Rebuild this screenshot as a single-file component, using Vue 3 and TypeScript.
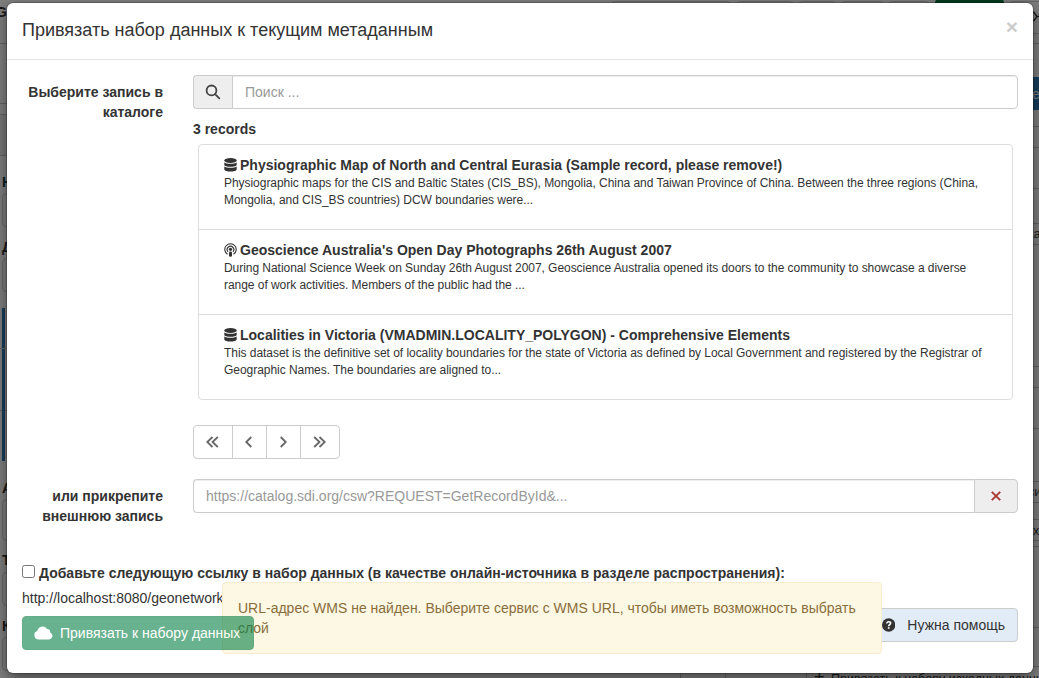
<script setup lang="ts">
import { ref } from 'vue'

interface CatalogRecord {
  kind: 'dataset' | 'service'
  title: string
  summary: string
}

interface Frame {
  x: number
  y: number
  w: number
  h: number
}

const query = ref('')
const remoteUrl = ref('')
const addLink = ref(false)

const records: CatalogRecord[] = [
  {
    kind: 'dataset',
    title: 'Physiographic Map of North and Central Eurasia (Sample record, please remove!)',
    summary:
      'Physiographic maps for the CIS and Baltic States (CIS_BS), Mongolia, China and Taiwan Province of China. Between the three regions (China, Mongolia, and CIS_BS countries) DCW boundaries were...',
  },
  {
    kind: 'service',
    title: "Geoscience Australia's Open Day Photographs 26th August 2007",
    summary:
      'During National Science Week on Sunday 26th August 2007, Geoscience Australia opened its doors to the community to showcase a diverse range of work activities. Members of the public had the ...',
  },
  {
    kind: 'dataset',
    title: 'Localities in Victoria (VMADMIN.LOCALITY_POLYGON) - Comprehensive Elements',
    summary:
      'This dataset is the definitive set of locality boundaries for the state of Victoria as defined by Local Government and registered by the Registrar of Geographic Names. The boundaries are aligned to...',
  },
]

const pager = [
  { name: 'first', d: 'M6.5 1 1.2 6l5.3 5M11.8 1 6.5 6l5.3 5', w: 13 },
  { name: 'prev', d: 'M6.3 1 1.2 6l5.1 5', w: 8 },
  { name: 'next', d: 'M1.7 1l5.1 5-5.1 5', w: 8 },
  { name: 'last', d: 'M1.2 1l5.3 5-5.3 5M6.5 1l5.3 5-5.3 5', w: 13 },
]

const toolbar: Frame[] = [
  { x: 611.5, y: 1.5, w: 119, h: 33 },
  { x: 736.5, y: 1.5, w: 57, h: 33 },
  { x: 798.5, y: 1.5, w: 37, h: 33 },
  { x: 841.5, y: 1.5, w: 42, h: 33 },
  { x: 888.5, y: 1.5, w: 41, h: 33 },
  { x: 1009.5, y: 1.5, w: 60, h: 32 },
]

const fields: Frame[] = [
  { x: 2.5, y: 193.5, w: 300, h: 33 },
  { x: 2.5, y: 258.5, w: 300, h: 33 },
  { x: 2.5, y: 499.5, w: 300, h: 41 },
  { x: 2.5, y: 572.5, w: 300, h: 33 },
  { x: 2.5, y: 637.5, w: 300, h: 33 },
]

const rightLines = [126.5, 147.5, 188.5, 223.5, 244.5, 366.5, 387.5, 428.5, 481.5, 502.5, 519.5, 540.5, 546.5, 627.5, 666.5]
</script>

<template>
  <div class="screen">
    <svg class="page" width="1039" height="678" aria-hidden="true">
      <rect x="0" y="115" width="20" height="40" fill="#f0f0f0" />
      <path d="M0 43.5H1039M0 103.5H20M0 114.5H20M0 155.5H20M0 348.5H20M0 410.5H20" stroke="#c8c8c8" />
      <path d="M1020 33.5H1039M680.5 660V678M725.5 660V678M806.5 660V678" stroke="#c8c8c8" />
      <rect v-for="b in toolbar" :key="b.x" :x="b.x" :y="b.y" :width="b.w" :height="b.h" rx="4" fill="#fff" stroke="#ccc" />
      <rect x="935" y="-1" width="69" height="34" rx="4" fill="#00793f" />
      <rect v-for="f in fields" :key="f.y" :x="f.x" :y="f.y" :width="f.w" :height="f.h" rx="4" fill="#fff" stroke="#ccc" />
      <rect x="2" y="308" width="3" height="40" fill="#337ab7" />
      <rect x="2" y="349" width="3" height="112" fill="#337ab7" />
      <path v-for="y in rightLines" :key="y" :d="`M1020 ${y}H1039`" stroke="#c4c4c4" />
      <rect x="1020" y="77" width="19" height="33" fill="#2d7cbd" />
      <path d="M1031 12.500h3l3 4-3 4h-3M1037 16.500h2" fill="none" stroke="#333" stroke-width="1.300" />
      <g class="page-text">
        <g class="strong">
          <text x="-4" y="17">G</text>
          <text x="2" y="187" fill="#123e3e">Н</text>
          <text x="2" y="252">Д</text>
          <text x="2" y="493">А</text>
          <text x="2" y="565">Т</text>
          <text x="2" y="631">К</text>
        </g>
        <text x="1032" y="99" fill="#fff">е</text>
        <g class="small">
          <text x="1028" y="238">ка</text>
          <text x="1028" y="496">си</text>
          <text x="1024" y="535">ых</text>
          <text x="1030" y="571" fill="#a33">:</text>
          <text x="831" y="683">Привязать к набору исходных данных</text>
        </g>
        <text x="814" y="683" class="plus">+</text>
      </g>
    </svg>
    <div class="backdrop"></div>

    <section class="modal" role="dialog">
      <header class="modal-header">
        <h4>Привязать набор данных к текущим метаданным</h4>
        <button class="close" type="button" aria-label="Close">×</button>
      </header>

      <div class="modal-body">
        <div class="row search-row">
          <label class="caption">Выберите запись в каталоге</label>
          <div class="content">
            <div class="group">
              <span class="addon search-addon">
                <svg width="16" height="16" viewBox="0 0 16 16"><circle cx="6.500" cy="6.400" r="4.900" /><path d="M10.1 10.1l4.2 4.2" /></svg>
              </span>
              <input v-model="query" type="text" placeholder="Поиск ..." />
            </div>
            <div class="count">3 records</div>
            <ul class="records">
              <li v-for="r in records" :key="r.title">
                <div class="title">
                  <svg v-if="r.kind === 'dataset'" width="13" height="14" viewBox="0 0 13 14">
                    <ellipse cx="6.500" cy="2.600" rx="6.200" ry="2.500" />
                    <path d="M.3 4.5c2.200 1.800 10.200 1.800 12.400 0v2.200c0 2.700-12.400 2.700-12.400 0zM.3 8.500c2.200 1.800 10.200 1.800 12.400 0v2.700c0 3.200-12.400 3.200-12.400 0z" />
                  </svg>
                  <svg v-else class="podcast" width="13" height="14" viewBox="0 0 13 14">
                    <path d="M3.500 11.300A5.700 5.700 0 1 1 9.500 11.300M4 8.800A3.300 3.300 0 1 1 9 8.800" />
                    <circle cx="6.500" cy="6.300" r="1.600" />
                    <rect x="5" y="8.600" width="3" height="5.100" rx="1.300" />
                  </svg>
                  <span>{{ r.title }}</span>
                </div>
                <p>{{ r.summary }}</p>
              </li>
            </ul>
            <div class="pager">
              <button v-for="p in pager" :key="p.name" type="button" :aria-label="p.name">
                <svg :width="p.w" height="12" :viewBox="`0 0 ${p.w} 12`"><path :d="p.d" /></svg>
              </button>
            </div>
          </div>
        </div>

        <div class="row remote-row">
          <label class="caption">или прикрепите внешнюю запись</label>
          <div class="content">
            <div class="group">
              <input v-model="remoteUrl" class="remote" type="text" placeholder="https://catalog.sdi.org/csw?REQUEST=GetRecordById&amp;..." />
              <button class="addon clear" type="button" aria-label="Clear">
                <svg width="10" height="10" viewBox="0 0 10 10"><path d="M.8.8l8.4 8.4M9.200.8L.8 9.200" /></svg>
              </button>
            </div>
          </div>
        </div>

        <label class="check">
          <input v-model="addLink" type="checkbox" />
          <span>Добавьте следующую ссылку в набор данных (в качестве онлайн-источника в разделе распространения):</span>
        </label>
        <div class="link">http://localhost:8080/geonetwork</div>

        <div class="actions">
          <button class="submit" type="button" disabled>
            <svg width="19" height="14" viewBox="0 0 18 13"><path d="M4.300 12.700A4.100 4.100 0 0 1 3.200 4.700 5 5 0 0 1 12.300 2.600 3.100 3.100 0 0 1 15.300 6 3.500 3.500 0 0 1 14.500 12.700z" /></svg>
            <span>Привязать к набору данных</span>
          </button>
          <button class="help" type="button">
            <svg width="14" height="14" viewBox="0 0 14 14">
              <circle cx="7" cy="7" r="7" />
              <path d="M5 5.400C5.200 3 9 3.200 9 5.200 9 6.600 7 6.500 7 8.200" />
              <rect x="6.100" y="9.300" width="1.800" height="1.700" />
            </svg>
            <span>Нужна помощь</span>
          </button>
        </div>
      </div>
      <div class="warning">URL-адрес WMS не найден. Выберите сервис с WMS URL, чтобы иметь возможность выбрать слой</div>
    </section>
  </div>
</template>

<style>
body {
  overflow: hidden;
}
</style>

<style scoped>
.screen {
  position: relative;
  width: 1039px;
  height: 678px;
  overflow: hidden;
  background: #fff;
  color: #333;
  font: 14px/20px "Liberation Sans", Arial, sans-serif;
}
.screen * {
  box-sizing: border-box;
}
.page,
.backdrop {
  position: absolute;
  inset: 0;
}
.page-text {
  font-size: 14px;
}
.page-text text:not([fill]) {
  fill: #333;
}
.strong {
  font-weight: bold;
}
.small {
  font-size: 12.5px;
}
.plus {
  font-size: 18px;
}
.backdrop {
  background: rgba(0, 0, 0, 0.5);
}
.modal {
  position: absolute;
  left: 7px;
  top: 3px;
  width: 1026px;
  height: 670px;
  border-radius: 6px;
  background: #fff;
  box-shadow: 0 0 0 1px rgba(0, 0, 0, 0.2), 0 5px 15px rgba(0, 0, 0, 0.5);
}
.modal-header {
  display: flex;
  justify-content: space-between;
  height: 57px;
  padding: 13px 15px;
  border-bottom: 1px solid #e5e5e5;
}
h4 {
  margin: 2px 0 0;
  font-size: 18px;
  font-weight: normal;
  line-height: 25px;
}
button {
  margin: 0;
  font: inherit;
}
.close {
  height: 21px;
  padding: 0;
  border: 0;
  background: none;
  color: #000;
  font-size: 21px;
  font-weight: bold;
  line-height: 21px;
  opacity: 0.2;
}
.modal-body {
  padding: 15px;
}
.row {
  display: flex;
  gap: 30px;
}
.caption {
  width: 141px;
  padding-top: 7px;
  font-weight: bold;
  text-align: right;
}
.content {
  flex: 1;
}
.group {
  display: flex;
  height: 34px;
}
.addon {
  display: flex;
  align-items: center;
  justify-content: center;
  padding: 0;
  border: 1px solid #ccc;
  background: #eee;
}
.search-addon {
  width: 39px;
  border-right: 0;
  border-radius: 4px 0 0 4px;
}
.search-addon svg {
  fill: none;
  stroke: #444;
  stroke-width: 1.8;
  stroke-linecap: round;
}
input[type='text'] {
  flex: 1;
  min-width: 0;
  height: 34px;
  margin: 0;
  padding: 6px 12px;
  border: 1px solid #ccc;
  border-radius: 0 4px 4px 0;
  outline: 0;
  color: #555;
  background: #fff;
  box-shadow: inset 0 1px 1px rgba(0, 0, 0, 0.075);
  font: inherit;
}
input[type='text'].remote {
  border-right: 0;
  border-radius: 4px 0 0 4px;
}
input::placeholder {
  color: #999;
  opacity: 1;
}
.clear {
  width: 44px;
  border-radius: 0 4px 4px 0;
}
.clear svg {
  fill: none;
  stroke: #a93835;
  stroke-width: 1.9;
}
.count {
  height: 35px;
  padding-top: 10px;
  font-weight: bold;
}
.records {
  margin: 0 5px;
  padding: 0;
  border: 1px solid #ddd;
  border-radius: 4px;
  list-style: none;
}
.records li {
  height: 85px;
  padding: 10px 25px;
  border-bottom: 1px solid #ddd;
}
.records li:last-child {
  height: 84px;
  border-bottom: 0;
}
.title {
  display: flex;
  gap: 3px;
  height: 20px;
  font-weight: bold;
}
.title svg {
  margin-top: 3px;
  fill: #333;
}
.podcast path {
  fill: none;
  stroke: #333;
  stroke-width: 1.1;
}
.records p {
  margin: 0;
  font-size: 12px;
  line-height: 17px;
  letter-spacing: -0.045px;
}
.pager {
  display: flex;
  margin-top: 25px;
}
.pager button {
  display: flex;
  align-items: center;
  justify-content: center;
  width: 35px;
  height: 34px;
  margin-left: -1px;
  padding: 0 1px 0 0;
  border: 1px solid #ccc;
  background: #fff;
}
.pager button:first-child {
  width: 40px;
  margin-left: 0;
  border-radius: 4px 0 0 4px;
}
.pager button:last-child {
  width: 40px;
  border-radius: 0 4px 4px 0;
}
.pager svg {
  fill: none;
  stroke: #666;
  stroke-width: 1.8;
}
.remote-row {
  margin-top: 20px;
}
.check {
  display: flex;
  gap: 4px;
  margin-top: 37px;
  font-weight: bold;
}
.check input {
  flex: none;
  width: 13px;
  height: 13px;
  margin: 2px 0 0;
}
.link {
  margin-top: 5px;
}
.actions {
  display: flex;
  align-items: flex-start;
  justify-content: space-between;
}
.submit {
  position: relative;
  z-index: 2;
  display: flex;
  align-items: center;
  gap: 7px;
  width: 232px;
  height: 34px;
  margin-top: 8px;
  padding: 0 11px;
  border: 1px solid #00763c;
  border-radius: 4px;
  background: #078045;
  color: #fff;
  opacity: 0.6;
  white-space: nowrap;
}
.submit svg {
  fill: #fff;
}
.help {
  display: flex;
  align-items: center;
  gap: 12px;
  width: 150px;
  height: 34px;
  padding: 0 12px 0 13px;
  border: 1px solid #ccc;
  border-radius: 4px;
  background: #e2ecf7;
  color: #333;
  white-space: nowrap;
}
.help path {
  fill: none;
  stroke: #fff;
  stroke-width: 1.7;
}
.help rect {
  fill: #fff;
}
.help circle {
  fill: #333;
}
.warning {
  position: absolute;
  z-index: 1;
  left: 215px;
  top: 579px;
  width: 660px;
  height: 72px;
  padding: 15px;
  border: 1px solid #faebcc;
  border-radius: 4px;
  background: #fcf8e3;
  color: #8a6d3b;
}
</style>
